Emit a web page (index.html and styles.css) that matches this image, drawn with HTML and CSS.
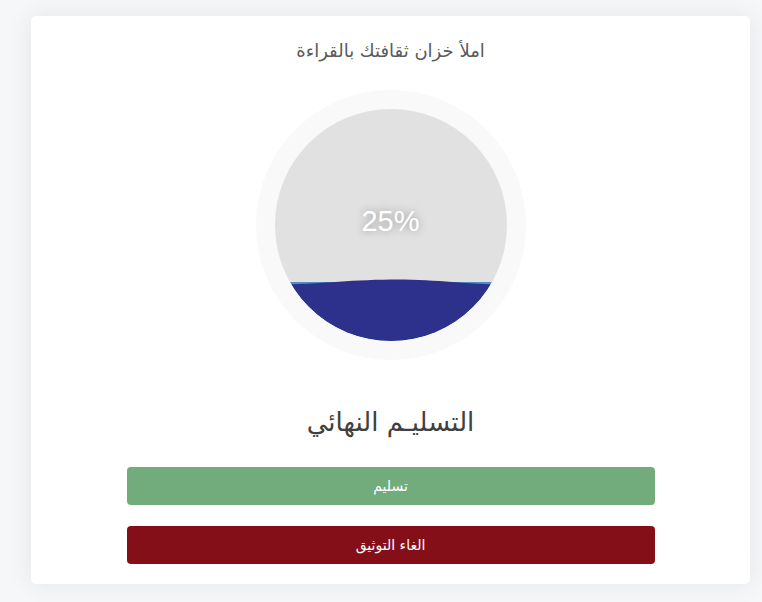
FILE: index.html
```html
<!DOCTYPE html>
<html lang="ar" dir="rtl">
<head>
<meta charset="utf-8">
<link rel="stylesheet" href="styles.css">
</head>
<body>
<div class="page">
  <div class="card">
    <p class="title">املأ خزان ثقافتك بالقراءة</p>
    <div class="gauge">
      <div class="inner">
        <svg class="wave" viewBox="0 0 232 232" width="232" height="232">
          <defs>
            <clipPath id="c"><circle cx="116" cy="116" r="116"/></clipPath>
          </defs>
          <g clip-path="url(#c)">
            <rect x="0" y="173" width="232" height="60" fill="#4b8fc8"/>
            <path d="M0 175.6 C 40 175.6, 70 171, 116 170.5 C 162 170, 192 175.6, 232 175.6 L232 232 L0 232 Z" fill="#2e318b"/>
          </g>
        </svg>
        <span class="pct">25%</span>
      </div>
    </div>
    <h2 class="heading">التسليـم النهائي</h2>
    <div class="actions">
      <button class="btn btn-submit">تسليم</button>
      <button class="btn btn-cancel">الغاء التوثيق</button>
    </div>
  </div>
</div>
</body>
</html>
```
FILE: styles.css
```css
html, body {
  margin: 0;
  padding: 0;
}
body {
  background: #f6f7f9;
  font-family: "DejaVu Sans", sans-serif;
  width: 762px;
  height: 602px;
  overflow: hidden;
}
.page {
  padding: 16px 12px 0 31px;
}
.card {
  background: #fff;
  border-radius: 5px;
  box-shadow: 0 0 24px rgba(40, 50, 70, 0.09);
  height: 568px;
  box-sizing: border-box;
  display: flex;
  flex-direction: column;
  align-items: center;
  padding-top: 24px;
}
.title {
  margin: 0;
  font-size: 18px;
  color: #5a5a5a;
  line-height: 22px;
}
.gauge {
  margin-top: 28px;
  width: 270px;
  height: 270px;
  border-radius: 50%;
  background: #f9f9f9;
  display: flex;
  align-items: center;
  justify-content: center;
}
.inner {
  position: relative;
  width: 232px;
  height: 232px;
  border-radius: 50%;
  background: #e1e1e1;
  overflow: hidden;
  display: flex;
  align-items: center;
  justify-content: center;
}
.wave {
  position: absolute;
  left: 0;
  top: 0;
}
.pct {
  position: relative;
  font-family: "Liberation Sans", Arial, sans-serif;
  font-size: 29px;
  color: #fff;
  text-shadow: 0 0 8px rgba(0, 0, 0, 0.35);
  margin-top: -7px;
}
.heading {
  margin: 46px 0 0;
  font-weight: normal;
  font-size: 26px;
  line-height: 32px;
  color: #404040;
}
.actions {
  margin-top: 29px;
  width: 528px;
  display: flex;
  flex-direction: column;
  gap: 21px;
}
.btn {
  height: 38px;
  border: 0;
  border-radius: 4px;
  color: #fff;
  font-family: "DejaVu Sans", sans-serif;
  font-size: 14px;
  padding: 0;
}
.btn-submit {
  background: #72ab7c;
}
.btn-cancel {
  background: #850f18;
}
```
